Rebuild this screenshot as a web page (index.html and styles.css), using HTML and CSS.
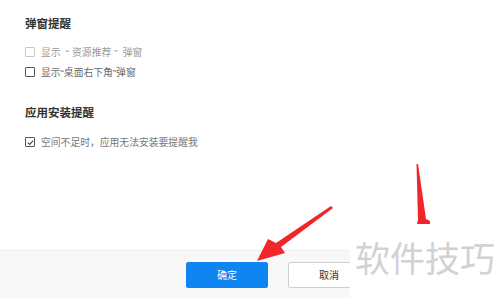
FILE: index.html
```html
<!DOCTYPE html>
<html lang="zh-CN">
<head>
  <meta charset="UTF-8">
  <title>弹窗设置</title>
  <link rel="stylesheet" href="styles.css">
</head>
<body>
  <div class="panel">
    <div class="settings">
      <h2 class="group-title">弹窗提醒</h2>
      <label class="option disabled"><span class="box"></span>显示 <span class="q">“</span>资源推荐<span class="q">”</span> 弹窗</label>
      <label class="option"><span class="box"></span>显示<span class="q">“</span>桌面右下角<span class="q">”</span>弹窗</label>

      <h2 class="group-title second">应用安装提醒</h2>
      <label class="option checked">
        <span class="box">
          <svg width="9" height="9" viewBox="0 0 9 9"><path d="M1.8 4.6 L3.7 6.4 L7.2 2.6" fill="none" stroke="#444" stroke-width="1.1"/></svg>
        </span>空间不足时，应用无法安装要提醒我</label>
    </div>

    <div class="footer">
      <button class="btn primary">确定</button>
      <button class="btn">取消</button>
    </div>

    <!-- 标注箭头 -->
    <svg class="arrows" width="500" height="298" viewBox="0 0 500 298">
      <polygon points="331,206 333,208 281,247 285,253 257,261 268,239 276,243" fill="#f0262a"/>
      <polygon points="416.5,164 418,164 426,219 430,221 430,224 417,224 418,220" fill="#f0262a"/>
    </svg>

    <div class="watermark">软件技巧</div>
  </div>
</body>
</html>
```

FILE: styles.css
```css
body {
  margin: 0;
  font-family: "Noto Sans CJK SC", "Noto Sans", sans-serif;
  background: #fff;
}

.panel {
  position: relative;
  width: 500px;
  height: 298px;
  overflow: hidden;
  display: flex;
  flex-direction: column;
}

.settings {
  flex: 1;
  padding: 14px 25px 0;
  display: flex;
  flex-direction: column;
  align-items: flex-start;
}

.group-title {
  margin: 0 0 10px;
  font-size: 11.5px;
  line-height: 18px;
  font-weight: bold;
  color: #333;
}

.group-title.second {
  margin-top: 21px;
  margin-bottom: 11px;
}

.option {
  display: flex;
  align-items: center;
  height: 20px;
  font-size: 9.8px;
  color: #6a6a6a;
  white-space: pre;
}

.option .q {
  font-family: "Liberation Sans", sans-serif;
}

.option.disabled .q {
  margin: 0 3px;
}

.option .box {
  width: 8px;
  height: 8px;
  border: 1px solid #555;
  border-radius: 1px;
  margin-right: 6px;
  display: flex;
}

.option.disabled {
  color: #9a9a9a;
}

.option.disabled .box {
  border-color: #c8c8c8;
}

.option.checked {
  color: #777;
}

.option.checked .box svg {
  margin: -0.5px;
}

.footer {
  height: 47px;
  background: #f8f8f8;
  border-top: 1px solid #eeeeee;
  display: flex;
  align-items: center;
  gap: 20px;
  padding-left: 186px;
}

.btn {
  width: 82px;
  height: 26px;
  font-family: inherit;
  font-size: 10px;
  color: #333;
  background: #fff;
  border: 1px solid #cfcfcf;
  border-radius: 2px;
  padding: 0;
}

.btn.primary {
  background: #0e85f0;
  border-color: #0e85f0;
  color: #fff;
}

.arrows {
  position: absolute;
  left: 0;
  top: 0;
  pointer-events: none;
}

.watermark {
  position: absolute;
  left: 350px;
  top: 232px;
  width: 150px;
  height: 66px;
  background: #fff;
  color: #d2d2d2;
  font-size: 35px;
  line-height: 50px;
  padding-left: 5px;
  box-sizing: border-box;
}
```
